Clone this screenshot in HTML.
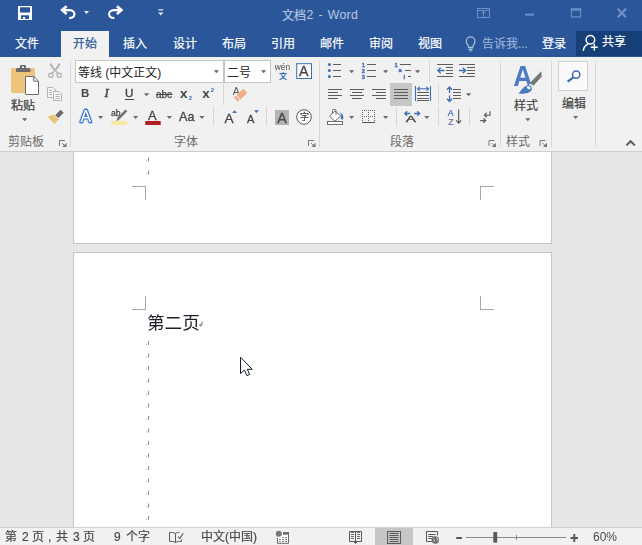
<!DOCTYPE html>
<html lang="zh-CN">
<head>
<meta charset="utf-8">
<title>文档2 - Word</title>
<style>
html,body{margin:0;padding:0;}
body{width:642px;height:545px;position:relative;overflow:hidden;background:#e4e7e6;font-family:"Liberation Sans","Noto Sans CJK SC",sans-serif;}
.a{position:absolute;}
svg.t{position:absolute;overflow:visible;}
svg.i{will-change:transform;}
svg.i{position:absolute;overflow:visible;left:0;top:0;}
svg text{font-family:"Liberation Sans","Noto Sans CJK SC",sans-serif;}
#title{left:0;top:0;width:642px;height:57px;background:#2b579a;}
#tab{left:61px;top:31px;width:48px;height:26px;background:#f1f1f1;}
#share{left:576px;top:31px;width:66px;height:25px;background:#173f77;}
#ribbon{left:0;top:57px;width:642px;height:94px;background:#f1f1f1;}
#ribline{left:0;top:151px;width:642px;height:1px;background:#cdcdcd;}
.page{background:#fff;border:1px solid #c6c6c6;box-sizing:border-box;}
#p1{left:73px;top:140px;width:479px;height:104px;}
#p2{left:73px;top:252px;width:479px;height:300px;}
#status{left:0;top:527px;width:642px;height:18px;background:#f1f1f1;border-top:1px solid #d0d0d0;box-sizing:border-box;}
.lt{font-family:"Liberation Sans",sans-serif;white-space:nowrap;line-height:1;}
.box{background:#fff;border:1px solid #c6c6c6;box-sizing:border-box;}
</style>
</head>
<body>
<div class="a page" id="p1"></div>
<div class="a page" id="p2"></div>

<!-- ===== document marks ===== -->
<svg class="i" width="642" height="545" viewBox="0 0 642 545">
<g fill="none" stroke="#a6a6a6" stroke-width="1" shape-rendering="crispEdges">
<path d="M132 186.500H145.500V200 M494 186.500H480.500V200 M132 309.500H145.500V296 M494 309.500H480.500V296"/>
</g>
<path d="M148.500 157.500V161.500" stroke="#8c8c8c" stroke-width="1" fill="none"/><rect x="146" y="160.300" width="1" height="1" fill="#b0b0b0"/><path d="M148.500 170.500V174.500" stroke="#8c8c8c" stroke-width="1" fill="none"/><rect x="146" y="173.300" width="1" height="1" fill="#b0b0b0"/><path d="M148.500 341.000V345.000" stroke="#8c8c8c" stroke-width="1" fill="none"/><rect x="146" y="343.800" width="1" height="1" fill="#b0b0b0"/><path d="M148.500 353.500V357.500" stroke="#8c8c8c" stroke-width="1" fill="none"/><rect x="146" y="356.300" width="1" height="1" fill="#b0b0b0"/><path d="M148.500 366.000V370.000" stroke="#8c8c8c" stroke-width="1" fill="none"/><rect x="146" y="368.800" width="1" height="1" fill="#b0b0b0"/><path d="M148.500 378.500V382.500" stroke="#8c8c8c" stroke-width="1" fill="none"/><rect x="146" y="381.300" width="1" height="1" fill="#b0b0b0"/><path d="M148.500 391.000V395.000" stroke="#8c8c8c" stroke-width="1" fill="none"/><rect x="146" y="393.800" width="1" height="1" fill="#b0b0b0"/><path d="M148.500 403.500V407.500" stroke="#8c8c8c" stroke-width="1" fill="none"/><rect x="146" y="406.300" width="1" height="1" fill="#b0b0b0"/><path d="M148.500 416.000V420.000" stroke="#8c8c8c" stroke-width="1" fill="none"/><rect x="146" y="418.800" width="1" height="1" fill="#b0b0b0"/><path d="M148.500 428.500V432.500" stroke="#8c8c8c" stroke-width="1" fill="none"/><rect x="146" y="431.300" width="1" height="1" fill="#b0b0b0"/><path d="M148.500 441.000V445.000" stroke="#8c8c8c" stroke-width="1" fill="none"/><rect x="146" y="443.800" width="1" height="1" fill="#b0b0b0"/><path d="M148.500 453.500V457.500" stroke="#8c8c8c" stroke-width="1" fill="none"/><rect x="146" y="456.300" width="1" height="1" fill="#b0b0b0"/><path d="M148.500 466.000V470.000" stroke="#8c8c8c" stroke-width="1" fill="none"/><rect x="146" y="468.800" width="1" height="1" fill="#b0b0b0"/><path d="M148.500 478.500V482.500" stroke="#8c8c8c" stroke-width="1" fill="none"/><rect x="146" y="481.300" width="1" height="1" fill="#b0b0b0"/><path d="M148.500 491.000V495.000" stroke="#8c8c8c" stroke-width="1" fill="none"/><rect x="146" y="493.800" width="1" height="1" fill="#b0b0b0"/><path d="M148.500 503.500V507.500" stroke="#8c8c8c" stroke-width="1" fill="none"/><rect x="146" y="506.300" width="1" height="1" fill="#b0b0b0"/><path d="M148.500 516.000V520.000" stroke="#8c8c8c" stroke-width="1" fill="none"/><rect x="146" y="518.800" width="1" height="1" fill="#b0b0b0"/>
<!-- paragraph mark after text -->
<g fill="none" stroke="#7a7a7a" stroke-width="1">
<path d="M202 321.500V325.200H199.600 M200.900 323.900L199.500 325.200L200.900 326.500"/>
</g>
<!-- mouse cursor -->
<path d="M240.500 357.200V373.600L244.400 370.100L246.900 375.600L249.600 374.400L247.300 369.300H252.200Z" fill="#fff" stroke="#0c1a33" stroke-width="1" stroke-linejoin="miter"/>
</svg>

<svg class="t" style="left:146.500px;top:313.400px" width="54.80" height="22.88" viewBox="0 0 54.80 22.88" fill="#1b1f2a" role="img" aria-label="第二页"><title>第二页</title><text x="0" y="15.488" font-size="17.600" fill="#1b1f2a">第二页</text></svg>

<div class="a" id="title"></div>
<div class="a" id="tab"></div>
<div class="a" id="share"></div>
<div class="a" id="ribbon"></div>
<div class="a" id="ribline"></div>
<div class="a" id="status"></div>
<div class="a" style="left:375px;top:528px;width:38px;height:17px;background:#c6c6c6;"></div>

<!-- font boxes -->
<div class="a box" style="left:75px;top:60px;width:149px;height:23px;"></div>
<div class="a box" style="left:224px;top:60px;width:47px;height:23px;"></div>
<!-- justify selected bg -->
<div class="a" style="left:390px;top:83px;width:22px;height:23px;background:#c6c6c6;"></div>
<!-- edit box -->
<div class="a" style="left:558px;top:61px;width:30px;height:30px;background:#fafafa;border:1px solid #cfcfcf;box-sizing:border-box;"></div>

<!-- title text -->
<svg class="t" style="left:282.300px;top:8.800px" width="26.00" height="15.60" viewBox="0 0 26.00 15.60" fill="#b9c7e0" role="img" aria-label="文档"><title>文档</title><text x="0" y="10.560" font-size="12" fill="#b9c7e0" stroke="#b9c7e0" stroke-width="0.200">文档</text></svg>
<div class="a lt" style="left:306.500px;top:8.800px;font-size:12.300px;color:#b9c7e0;word-spacing:1px;letter-spacing:0.350px;">2 - Word</div>

<!-- tabs -->
<svg class="t" style="left:15px;top:36.800px" width="26.00" height="15.60" viewBox="0 0 26.00 15.60" fill="#ffffff" role="img" aria-label="文件"><title>文件</title><text x="0" y="10.560" font-size="12" fill="#ffffff" stroke="#ffffff" stroke-width="0.200">文件</text></svg>
<svg class="t" style="left:72.600px;top:36.800px" width="26.00" height="15.60" viewBox="0 0 26.00 15.60" fill="#2b579a" role="img" aria-label="开始"><title>开始</title><text x="0" y="10.560" font-size="12" fill="#2b579a" stroke="#2b579a" stroke-width="0.200">开始</text></svg>
<svg class="t" style="left:122.600px;top:36.800px" width="26.00" height="15.60" viewBox="0 0 26.00 15.60" fill="#ffffff" role="img" aria-label="插入"><title>插入</title><text x="0" y="10.560" font-size="12" fill="#ffffff" stroke="#ffffff" stroke-width="0.200">插入</text></svg>
<svg class="t" style="left:172.800px;top:36.800px" width="26.00" height="15.60" viewBox="0 0 26.00 15.60" fill="#ffffff" role="img" aria-label="设计"><title>设计</title><text x="0" y="10.560" font-size="12" fill="#ffffff" stroke="#ffffff" stroke-width="0.200">设计</text></svg>
<svg class="t" style="left:221.600px;top:36.800px" width="26.00" height="15.60" viewBox="0 0 26.00 15.60" fill="#ffffff" role="img" aria-label="布局"><title>布局</title><text x="0" y="10.560" font-size="12" fill="#ffffff" stroke="#ffffff" stroke-width="0.200">布局</text></svg>
<svg class="t" style="left:270.600px;top:36.800px" width="26.00" height="15.60" viewBox="0 0 26.00 15.60" fill="#ffffff" role="img" aria-label="引用"><title>引用</title><text x="0" y="10.560" font-size="12" fill="#ffffff" stroke="#ffffff" stroke-width="0.200">引用</text></svg>
<svg class="t" style="left:320px;top:36.800px" width="26.00" height="15.60" viewBox="0 0 26.00 15.60" fill="#ffffff" role="img" aria-label="邮件"><title>邮件</title><text x="0" y="10.560" font-size="12" fill="#ffffff" stroke="#ffffff" stroke-width="0.200">邮件</text></svg>
<svg class="t" style="left:369px;top:36.800px" width="26.00" height="15.60" viewBox="0 0 26.00 15.60" fill="#ffffff" role="img" aria-label="审阅"><title>审阅</title><text x="0" y="10.560" font-size="12" fill="#ffffff" stroke="#ffffff" stroke-width="0.200">审阅</text></svg>
<svg class="t" style="left:417.800px;top:36.800px" width="26.00" height="15.60" viewBox="0 0 26.00 15.60" fill="#ffffff" role="img" aria-label="视图"><title>视图</title><text x="0" y="10.560" font-size="12" fill="#ffffff" stroke="#ffffff" stroke-width="0.200">视图</text></svg>
<svg class="t" style="left:481.800px;top:36.800px" width="48.01" height="15.60" viewBox="0 0 48.01 15.60" fill="#a6b8da" role="img" aria-label="告诉我..."><title>告诉我...</title><text x="0" y="10.560" font-size="12" fill="#a6b8da" stroke="#a6b8da" stroke-width="0.050">告诉我...</text></svg>
<svg class="t" style="left:541.600px;top:36.800px" width="26.00" height="15.60" viewBox="0 0 26.00 15.60" fill="#ffffff" role="img" aria-label="登录"><title>登录</title><text x="0" y="10.560" font-size="12" fill="#ffffff" stroke="#ffffff" stroke-width="0.200">登录</text></svg>
<svg class="t" style="left:601.800px;top:35.200px" width="26.00" height="15.60" viewBox="0 0 26.00 15.60" fill="#ffffff" role="img" aria-label="共享"><title>共享</title><text x="0" y="10.560" font-size="12" fill="#ffffff" stroke="#ffffff" stroke-width="0.200">共享</text></svg>

<!-- ribbon labels -->
<svg class="t" style="left:11px;top:98.600px" width="26.00" height="15.60" viewBox="0 0 26.00 15.60" fill="#444444" role="img" aria-label="粘贴"><title>粘贴</title><text x="0" y="10.560" font-size="12" fill="#444444" stroke="#444444" stroke-width="0.250">粘贴</text></svg>
<svg class="t" style="left:7.500px;top:134.800px" width="38.00" height="15.60" viewBox="0 0 38.00 15.60" fill="#6a6a6a" role="img" aria-label="剪贴板"><title>剪贴板</title><text x="0" y="10.560" font-size="12" fill="#6a6a6a">剪贴板</text></svg>
<svg class="t" style="left:174.200px;top:134.800px" width="26.00" height="15.60" viewBox="0 0 26.00 15.60" fill="#6a6a6a" role="img" aria-label="字体"><title>字体</title><text x="0" y="10.560" font-size="12" fill="#6a6a6a">字体</text></svg>
<svg class="t" style="left:390px;top:134.800px" width="26.00" height="15.60" viewBox="0 0 26.00 15.60" fill="#6a6a6a" role="img" aria-label="段落"><title>段落</title><text x="0" y="10.560" font-size="12" fill="#6a6a6a">段落</text></svg>
<svg class="t" style="left:514.200px;top:98.800px" width="26.00" height="15.60" viewBox="0 0 26.00 15.60" fill="#444444" role="img" aria-label="样式"><title>样式</title><text x="0" y="10.560" font-size="12" fill="#444444" stroke="#444444" stroke-width="0.200">样式</text></svg>
<svg class="t" style="left:505.800px;top:134.800px" width="26.00" height="15.60" viewBox="0 0 26.00 15.60" fill="#6a6a6a" role="img" aria-label="样式"><title>样式</title><text x="0" y="10.560" font-size="12" fill="#6a6a6a">样式</text></svg>
<svg class="t" style="left:562px;top:97px" width="26.00" height="15.60" viewBox="0 0 26.00 15.60" fill="#444444" role="img" aria-label="编辑"><title>编辑</title><text x="0" y="10.560" font-size="12" fill="#444444" stroke="#444444" stroke-width="0.200">编辑</text></svg>
<svg class="t" style="left:77.500px;top:65.600px" width="84.80" height="15.60" viewBox="0 0 84.80 15.60" fill="#262626" role="img" aria-label="等线 (中文正文)"><title>等线 (中文正文)</title><text x="0" y="10.560" font-size="12" fill="#262626">等线 (中文正文)</text></svg>
<svg class="t" style="left:227.200px;top:65.600px" width="26.00" height="15.60" viewBox="0 0 26.00 15.60" fill="#262626" role="img" aria-label="二号"><title>二号</title><text x="0" y="10.560" font-size="12" fill="#262626">二号</text></svg>
<svg class="t" style="left:278.800px;top:71.600px" width="10.00" height="10.40" viewBox="0 0 10.00 10.40" fill="#3e6db5" role="img" aria-label="文"><title>文</title><text x="0" y="7.040" font-size="8" font-weight="bold" fill="#3e6db5">文</text></svg>
<svg class="i" width="642" height="545" viewBox="0 0 642 545">
<!-- ===== title bar: QAT ===== -->
<!-- save -->
<path fill="#fff" fill-rule="evenodd" d="M18.300 6H31.700Q32 6 32 6.300V19.700Q32 20 31.700 20H18.300Q18 20 18 19.700V6.300Q18 6 18.300 6Z M20 7.200H30V12.600H20Z M21 15.200H29V18.900H25V17H23V18.900H21Z"/>
<g fill="none" stroke="#fff" stroke-linecap="butt" stroke-linejoin="miter">
<!-- undo -->
<path d="M66.600 6.300L62.200 10.100L66.600 13.900" stroke-width="2.700"/>
<path d="M62.600 10.100H69.500C73 10.100 74.400 12.300 74.400 14C74.400 16.400 72.300 17.900 69.200 18.100" stroke-width="2.100"/>
<!-- redo -->
<path d="M116.900 6.300L121.300 10.100L116.900 13.900" stroke-width="2.700"/>
<path d="M120.900 10.100H114C110.500 10.100 109.100 12.300 109.100 14C109.100 16.400 111.200 17.900 114.300 18.100" stroke-width="2.100"/>
</g>
<path d="M84 11H89L86.500 14Z" fill="#e6ecf5"/>
<path d="M158.400 9.300H163.200V10.600H158.400Z M158.200 12.400H163.400L160.800 15.600Z" fill="#e6ecf5"/>
<!-- window controls (dim) -->
<g fill="none" stroke="#7090c5" stroke-width="1">
<rect x="477.500" y="8.500" width="12" height="9"/>
<path d="M478 10.500H489 M483.500 11.500V17.500 M481.300 13.700L483.500 11.500L485.700 13.700"/>
<path d="M525 14.600H534" stroke-width="2"/>
<rect x="571.500" y="9" width="9" height="8" stroke-width="1.200"/>
<path d="M571 9.600H581" stroke-width="2.200"/>
<path d="M617.600 8.800L626 17.200 M626 8.800L617.600 17.200" stroke-width="2.300"/>
</g>
<!-- lightbulb -->
<g fill="none" stroke="#aebedc" stroke-width="1.200">
<path d="M468.600 47.400C468.600 45.300 466.300 44.200 466.300 41.200C466.300 38.700 468.200 36.900 470.600 36.900C473 36.900 474.900 38.700 474.900 41.200C474.900 44.200 472.600 45.300 472.600 47.400Z"/>
<path d="M468.500 49.400H472.700" stroke-width="1.700"/>
<path d="M469.500 51H471.700" stroke-width="0.900"/>
</g>
<!-- share person -->
<g fill="none" stroke="#fff" stroke-width="1.500">
<circle cx="590.400" cy="39.800" r="4.300"/>
<path d="M583.300 50.900C583.600 47 585.400 45 588.200 44"/>
<path d="M594.300 43.800V50.600 M590.800 47.200H597.800"/>
</g>

<!-- ===== clipboard group ===== -->
<!-- paste icon -->
<rect x="11" y="68" width="24" height="25" rx="2" fill="#ecc47c"/>
<path d="M16 72V69.500Q16 68 17.500 68H20V66Q20 65 21 65H25Q26 65 26 66V68H29Q30.500 68 30.500 69.500V72Z" fill="#6d6d6d"/>
<rect x="22" y="66.300" width="2" height="1.700" fill="#f1f1f1"/>
<path d="M25.500 76.500H33.800L38.500 81.200V94.500H25.500Z" fill="#fff" stroke="#6d6d6d" stroke-width="1"/>
<path d="M33.800 76.500V81.200H38.500" fill="none" stroke="#6d6d6d" stroke-width="1"/>
<path d="M22 118.200H27.200L24.600 121.200Z" fill="#666"/>
<!-- scissors (disabled, light) -->
<g fill="none" stroke="#b2b2b2" stroke-width="1.200">
<circle cx="50.800" cy="75.300" r="2.100"/>
<circle cx="59.200" cy="75.300" r="2.100"/>
<path d="M52 73.500L56.500 68.500 M58 73.500L53.500 68.500"/>
<path d="M56 69.500L59.800 63.600 M54 69.500L50.200 63.600" stroke-width="2"/>
</g>
<!-- copy (disabled) -->
<g fill="#f6f6f6" stroke="#b4b4b4" stroke-width="1">
<path d="M47.500 87.500H53L55.500 90V97.500H47.500Z"/>
<path d="M53.500 91.500H59L61.500 94V100.500H53.500Z"/>
</g>
<g stroke="#b4b4b4" stroke-width="1" fill="none">
<path d="M49 90.500H52 M49 92.500H52 M49 94.500H52 M55.500 94.500H59.500 M55.500 96.500H59.500 M55.500 98.500H59.500"/>
</g>
<!-- format painter -->
<path d="M60.600 109.800L63.600 112.800L58.200 118.200L55.200 115.200Z" fill="#6a6a6a"/>
<path d="M54 114.500L58.800 119.300L54.500 124L47.300 116.800Z" fill="#ecc47c"/>
<path d="M54.600 115.200L58.200 118.800" stroke="#f1f1f1" stroke-width="0.800"/>
<!-- launcher icons -->
<g id="lnch" fill="none" stroke="#777" stroke-width="1">
<path d="M59.500 146V140.500H65"/>
<path d="M62 143L65 146"/>
<path d="M66.500 142.800V147H62.300Z" fill="#777" stroke="none"/>
</g>
<use href="#lnch" x="249"/>
<use href="#lnch" x="429.500"/>
<use href="#lnch" x="480.500"/>

<!-- ===== separators ===== -->
<g stroke="#d6d6d6" stroke-width="1" fill="none" shape-rendering="crispEdges">
<path d="M70.500 61V147 M319.500 61V147 M500.500 61V147 M551.500 61V147 M595.500 61V147"/>
<path d="M223.500 84V105 M213.500 106V126 M266.500 106V126"/>
<path d="M429.500 61V82 M438.500 84V105 M396.500 107V126 M438.500 107V126 M469.500 107V126"/>
</g>

<!-- ===== dropdown arrows ===== -->
<defs><path id="dd" d="M0 0H5.200L2.600 3Z"/></defs>
<g fill="#6a6a6a">
<use href="#dd" x="213.800" y="70.200"/>
<use href="#dd" x="261" y="70.200"/>
<use href="#dd" x="144" y="93.200"/>
<use href="#dd" x="98" y="116"/>
<use href="#dd" x="133" y="116"/>
<use href="#dd" x="166.800" y="116"/>
<use href="#dd" x="199.400" y="116"/>
<use href="#dd" x="349" y="70.200"/>
<use href="#dd" x="383" y="70.200"/>
<use href="#dd" x="415" y="70.200"/>
<use href="#dd" x="466" y="93.200"/>
<use href="#dd" x="349" y="116"/>
<use href="#dd" x="383" y="116"/>
<use href="#dd" x="424.200" y="116"/>
<use href="#dd" x="525.200" y="118.200"/>
<use href="#dd" x="573" y="116"/>
</g>

<!-- ===== font group ===== -->
<text x="81.100" y="97.400" font-size="11.500" font-weight="bold" fill="#444">B</text>
<text x="104.600" y="97.400" font-size="12.600" font-style="italic" fill="#444" stroke="#444" stroke-width="0.450" style="font-family:'Liberation Serif',serif">I</text>
<text x="124.900" y="97.400" font-size="11.600" fill="#444" stroke="#444" stroke-width="0.350">U</text>
<path d="M125 99.500H134" stroke="#444" stroke-width="1"/>
<text x="156" y="97.800" font-size="10" fill="#444" stroke="#444" stroke-width="0.250">abc</text>
<path d="M156 94.500H172.500" stroke="#444" stroke-width="1"/>
<text x="180" y="97.900" font-size="13.500" font-weight="bold" fill="#444">x</text>
<text x="188.800" y="99.900" font-size="6" font-weight="bold" fill="#3e6db5">2</text>
<text x="202.300" y="97.900" font-size="13.500" font-weight="bold" fill="#444">x</text>
<text x="210.800" y="92.400" font-size="6" font-weight="bold" fill="#3e6db5">2</text>
<!-- text effects A -->
<text x="80.400" y="121.900" font-size="15.800" fill="#fff" stroke="#cddff5" stroke-width="4.200" stroke-linejoin="round">A</text>
<text x="80.400" y="121.900" font-size="15.800" fill="#fff" stroke="#3570c4" stroke-width="2.400" stroke-linejoin="round">A</text>
<text x="80.400" y="121.900" font-size="15.800" fill="#fff" stroke="#fff" stroke-width="0.200">A</text>
<!-- highlighter -->
<text x="111" y="116.200" font-size="8.600" fill="#444" stroke="#444" stroke-width="0.250">ab</text>
<path d="M126.400 110.400L117.600 119.400" stroke="#6d6d6d" stroke-width="2.500"/>
<path d="M118 118.600L116 121L119 120Z" fill="#6d6d6d"/>
<rect x="111.300" y="121" width="15.600" height="4" fill="#fbe8a0"/>
<!-- font color -->
<text x="148.100" y="119.800" font-size="12.900" fill="#444" stroke="#444" stroke-width="0.300">A</text>
<rect x="145.300" y="121" width="15.400" height="4" fill="#ad1f23"/>
<!-- Aa -->
<text x="179" y="120.700" font-size="12.600" fill="#444" stroke="#444" stroke-width="0.300">Aa</text>
<!-- clear formatting -->
<text x="232.700" y="94.800" font-size="10.400" fill="#555">A</text>
<g transform="translate(240.600,95.200) rotate(-42)">
<rect x="-6.500" y="-3" width="13" height="6" rx="0.800" fill="#efae88"/>
<rect x="-3.800" y="-3" width="0.900" height="6" fill="#f1f1f1"/>
</g>
<!-- grow / shrink -->
<text x="224.600" y="122.900" font-size="13.600" fill="#444" stroke="#444" stroke-width="0.300">A</text>
<path d="M232.200 113H237L234.600 110.300Z" fill="#3e6db5"/>
<text x="247.100" y="122.900" font-size="11" fill="#444" stroke="#444" stroke-width="0.300">A</text>
<path d="M254 110.300H259L256.500 113.100Z" fill="#3e6db5"/>
<!-- wén -->
<text x="274.800" y="69.500" font-size="8.300" fill="#4a4a4a">wén</text>
<!-- boxed A -->
<rect x="296.700" y="63.700" width="14.800" height="14.800" fill="#fafafa" stroke="#3e6db5" stroke-width="1"/>
<text x="299" y="76" font-size="14.200" fill="#444" stroke="#444" stroke-width="0.300">A</text>
<!-- shaded A -->
<rect x="275" y="110" width="14" height="15" fill="#b3b3b3"/>
<text x="277.200" y="122.600" font-size="14.200" fill="#444" stroke="#444" stroke-width="0.300">A</text>
<!-- enclosed -->
<circle cx="304" cy="117" r="7.300" fill="#fff" stroke="#555" stroke-width="1"/>

<!-- ===== paragraph group ===== -->
<g fill="#3e6db5">
<circle cx="329.400" cy="64.600" r="1.500"/><circle cx="329.400" cy="70.600" r="1.500"/><circle cx="329.400" cy="76.500" r="1.500"/>
</g>
<g stroke="#5c5c5c" stroke-width="1" fill="none" shape-rendering="crispEdges">
<path d="M333 64.500H341 M333 70.500H341 M333 76.500H341"/>
<path d="M367 64.500H376 M367 70.500H376 M367 76.500H376"/>
<path d="M400 64.500H411 M405 70.500H411 M408 76.500H411"/>
<!-- align left/center/right/justify -->
<path d="M328 89.500H342 M328 92.500H338 M328 95.500H342 M328 98.500H338"/>
<path d="M350 89.500H364 M352 92.500H362 M350 95.500H364 M352 98.500H362"/>
<path d="M372 89.500H386 M376 92.500H386 M372 95.500H386 M376 98.500H386"/>
<path d="M394 89.500H408 M394 92.500H408 M394 95.500H408 M394 98.500H408"/>
<!-- distributed -->
<path d="M417 92.500H429 M417 95.500H429 M417 98.500H429 M417 100.500H429"/>
<!-- line spacing lines -->
<path d="M453 89.500H461 M453 92.500H461 M453 95.500H461 M453 98.500H461"/>
<!-- indent icons -->
<path d="M437 64.500H453 M446 67.500H453 M446 70.500H453 M446 73.500H453 M437 76.500H453"/>
<path d="M459 64.500H475 M467 67.500H475 M467 70.500H475 M467 73.500H475 M459 76.500H475"/>
</g>
<!-- numbering digits -->
<g font-size="5.800" font-weight="bold" fill="#3e6db5" stroke="#3e6db5" stroke-width="0.300">
<text x="361.800" y="66.600">1</text><text x="361.800" y="72.600">2</text><text x="361.800" y="78.500">3</text>
<text x="394.600" y="66.600">1</text><text x="398.600" y="71.900">a</text><text x="403.600" y="78.800">i</text>
</g>
<g stroke="#3e6db5" stroke-width="1.300" fill="none">
<!-- indent arrows -->
<path d="M444.400 70.500H438 M440.600 67.800L437.800 70.500L440.600 73.200"/>
<path d="M459 70.500H465.400 M462.800 67.800L465.600 70.500L462.800 73.200"/>
<!-- distributed bars & arrow -->
<path d="M415.500 86V101 M430.500 86V101" stroke-width="1.100"/>
<path d="M417.600 88.800H428.600 M419.800 86.800L417.600 88.800L419.800 90.800 M426.400 86.800L428.600 88.800L426.400 90.800" stroke-width="1.100"/>
<!-- line spacing arrow -->
<path d="M449.500 87.200V93 M447 89.700L449.500 87L452 89.700 M449.500 95.600V101.300 M447 98.800L449.500 101.500L452 98.800" stroke-width="1.300"/>
<!-- asian layout arrows -->
<path d="M404.800 113.500H410.200 M407.200 111.300L404.800 113.500L407.200 115.700 M414.200 113.500H419.600 M417.200 111.300L419.600 113.500L417.200 115.700" stroke-width="1.300"/>
</g>
<!-- asian layout wide A -->
<text transform="translate(405.700,122.300) scale(1.600,0.950)" font-size="9.500" fill="#444" stroke="#444" stroke-width="0.350">A</text>
<!-- paint bucket -->
<g fill="#fff" stroke="#6e6e6e" stroke-width="1">
<path d="M329.500 116.300L335 111L340.600 116L335 121.200Z"/>
<path d="M332.500 113.400V110.500Q332.500 109.500 333.500 109.500H335Q336 109.500 336 110.500V115.200" fill="none"/>
<rect x="327.500" y="121.500" width="15" height="3"/>
</g>
<path d="M339.600 112.600C342.200 113.300 343.700 115.800 343.300 118.200C343 119.700 341.400 119.900 340.800 118.700C340.400 117.700 341.400 116.600 341.200 115.400C341 114.400 340.300 113.500 339.600 112.600Z" fill="#3e6db5"/>
<!-- borders icon -->
<path d="M362 110h1v1h-1zM362 112h1v1h-1zM362 114h1v1h-1zM362 116h1v1h-1zM362 118h1v1h-1zM362 120h1v1h-1zM364 110h1v1h-1zM364 116h1v1h-1zM366 110h1v1h-1zM366 116h1v1h-1zM368 110h1v1h-1zM368 112h1v1h-1zM368 114h1v1h-1zM368 116h1v1h-1zM368 118h1v1h-1zM368 120h1v1h-1zM370 110h1v1h-1zM370 116h1v1h-1zM372 110h1v1h-1zM372 116h1v1h-1zM374 110h1v1h-1zM374 112h1v1h-1zM374 114h1v1h-1zM374 116h1v1h-1zM374 118h1v1h-1zM374 120h1v1h-1z" fill="#666" shape-rendering="crispEdges"/>
<path d="M362 122.500H375" stroke="#555" stroke-width="1" shape-rendering="crispEdges"/>
<!-- sort -->
<text x="447.700" y="115.900" font-size="8.800" fill="#3e6db5" stroke="#3e6db5" stroke-width="0.250">A</text>
<text x="448.200" y="124.700" font-size="8.800" fill="#6f62ad" stroke="#6f62ad" stroke-width="0.200">Z</text>
<path d="M458.700 109.500V123 M456.200 120.400L458.700 123.200L461.200 120.400" stroke="#555" stroke-width="1.100" fill="none"/>
<!-- show marks -->
<g stroke="#555" stroke-width="1.100" fill="none">
<path d="M490 111.300V115.200H484.600 M486.800 113L484.400 115.200L486.800 117.400"/>
<path d="M480.200 120.600H485.600 M483.400 118.400L485.800 120.600L483.400 122.800"/>
</g>

<!-- ===== styles ===== -->
<text transform="translate(513.200,85.800) scale(0.900,1)" font-size="29.600" font-weight="bold" fill="#4a7bc4">A</text>
<path d="M541.400 71.200L541.600 76.800L533.400 85.800L530 82.800Z" fill="#767676"/>
<path d="M529.800 83.600L532.500 86L531.400 87.200L528.700 84.800Z" fill="#f1f1f1"/>
<path d="M518.400 93.800C521.500 90 523.500 86.200 527.500 85.200C530.500 84.800 532.200 87 531.800 89.400C531 92.600 526.500 93.800 518.400 93.800Z" fill="#4a7bc4"/>
<ellipse cx="528.600" cy="87.600" rx="2" ry="1.400" fill="#fff" transform="rotate(35 528.600 87.600)"/>
<!-- ===== edit magnifier ===== -->
<circle cx="576.200" cy="74.600" r="3.700" fill="none" stroke="#3e6db5" stroke-width="1.500"/>
<path d="M573.400 77.400L567.600 81.600" stroke="#3e6db5" stroke-width="2.200"/>
<!-- collapse chevron -->
<path d="M626.400 145.400L630.600 141.200L634.800 145.400" fill="none" stroke="#5a5a5a" stroke-width="2"/>

<!-- ===== status bar icons ===== -->
<g fill="none" stroke="#5a5a5a" stroke-width="1">
<!-- proofing book -->
<path d="M175.500 533.500C173.500 532.300 171.500 532.300 169.500 532.500V541.500C171.500 541.300 173.500 541.300 175.500 542.500C177.500 541.300 179 541.300 181.500 541.500V539.500"/>
<path d="M175.500 533.500V542.500 M175.500 533.500C177 532.600 178 532.400 179.500 532.500"/>
<path d="M178 536.500L179.800 538.500L183.200 533.200" stroke-width="1.100"/>
<!-- read mode -->
<path d="M349.500 531.500V541.500H361.500V531.500Z"/>
<path d="M355.500 531.500V543.500 M354 542L355.500 543.500L357 542" />
<path d="M351 532.500H354 M351 534.500H354 M351 536.500H354 M351 538.500H354 M357 532.500H360 M357 534.500H360 M357 536.500H360 M357 538.500H360" stroke="#707070"/>
<!-- print layout -->
<rect x="387.500" y="531.500" width="13" height="12"/>
<path d="M389.500 533.500H398.500 M389.500 535.500H398.500 M389.500 537.500H398.500 M389.500 539.500H398.500 M389.500 541.500H398.500"/>
<!-- web layout -->
<path d="M432 541.500H426.500V531.500H437.500V535.500"/>
<path d="M428.300 534.500H435.700 M428.300 536.500H433 M428.300 538.500H432"/>
</g>
<circle cx="435.300" cy="540" r="3.700" fill="#6a6a6a"/>
<path d="M433.200 538.600L434.600 540.200L434 542 M436 537.400L437.800 539L436.800 541" fill="none" stroke="#d8d8d8" stroke-width="0.900"/>
<!-- macro icon -->
<rect x="278" y="532.500" width="10.500" height="11" fill="#fff"/>
<path d="M277.500 538V543.300H288.500V532.500H283" fill="none" stroke="#6a6a6a" stroke-width="1"/>
<rect x="283" y="532" width="6" height="2.700" fill="#707070"/>
<circle cx="278.800" cy="533.700" r="3" fill="#777"/>
<g fill="#6a6a6a"><rect x="282.100" y="537.000" width="1.800" height="0.900"/><rect x="285.200" y="537.000" width="1.800" height="0.900"/><rect x="279.000" y="539.100" width="1.800" height="0.900"/><rect x="282.100" y="539.100" width="1.800" height="0.900"/><rect x="285.200" y="539.100" width="1.800" height="0.900"/><rect x="279.000" y="541.100" width="1.800" height="0.900"/><rect x="282.100" y="541.100" width="1.800" height="0.900"/><rect x="285.200" y="541.100" width="1.800" height="0.900"/></g>
<!-- zoom slider -->
<path d="M456.200 538H462" stroke="#5a5a5a" stroke-width="2"/>
<path d="M466 537.500H565.500" stroke="#8a8a8a" stroke-width="1" shape-rendering="crispEdges"/>
<path d="M516.500 535V540" stroke="#8a8a8a" stroke-width="1" shape-rendering="crispEdges"/>
<rect x="493.300" y="532" width="3.900" height="10.600" fill="#5a5a5a"/>
<path d="M570.600 538H578 M574.300 534V542" stroke="#5a5a5a" stroke-width="2"/>
</svg>

<svg class="t" style="left:299.500px;top:112.300px" width="11.00" height="11.70" viewBox="0 0 11.00 11.70" fill="#444444" role="img" aria-label="字"><title>字</title><text x="0" y="7.920" font-size="9" fill="#444444" stroke="#444444" stroke-width="0.200">字</text></svg>

<!-- status bar -->
<svg class="t" style="left:4.800px;top:530.400px" width="14.00" height="15.60" viewBox="0 0 14.00 15.60" fill="#4a4a4a" role="img" aria-label="第"><title>第</title><text x="0" y="10.560" font-size="12" fill="#4a4a4a" stroke="#4a4a4a" stroke-width="0.200">第</text></svg><svg class="t" style="left:21.700px;top:530.400px" width="8.66" height="15.60" viewBox="0 0 8.66 15.60" fill="#4a4a4a" role="img" aria-label="2"><title>2</title><text x="0" y="10.560" font-size="12" fill="#4a4a4a" stroke="#4a4a4a" stroke-width="0.200">2</text></svg><svg class="t" style="left:31.800px;top:530.400px" width="14.00" height="15.60" viewBox="0 0 14.00 15.60" fill="#4a4a4a" role="img" aria-label="页"><title>页</title><text x="0" y="10.560" font-size="12" fill="#4a4a4a" stroke="#4a4a4a" stroke-width="0.200">页</text></svg><svg class="t" style="left:48.200px;top:530.400px" width="5.34" height="15.60" viewBox="0 0 5.34 15.60" fill="#4a4a4a" role="img" aria-label=","><title>,</title><text x="0" y="10.560" font-size="12" fill="#4a4a4a" stroke="#4a4a4a" stroke-width="0.200">,</text></svg><svg class="t" style="left:55.600px;top:530.400px" width="14.00" height="15.60" viewBox="0 0 14.00 15.60" fill="#4a4a4a" role="img" aria-label="共"><title>共</title><text x="0" y="10.560" font-size="12" fill="#4a4a4a" stroke="#4a4a4a" stroke-width="0.200">共</text></svg><svg class="t" style="left:72.500px;top:530.400px" width="8.66" height="15.60" viewBox="0 0 8.66 15.60" fill="#4a4a4a" role="img" aria-label="3"><title>3</title><text x="0" y="10.560" font-size="12" fill="#4a4a4a" stroke="#4a4a4a" stroke-width="0.200">3</text></svg><svg class="t" style="left:83.100px;top:530.400px" width="14.00" height="15.60" viewBox="0 0 14.00 15.60" fill="#4a4a4a" role="img" aria-label="页"><title>页</title><text x="0" y="10.560" font-size="12" fill="#4a4a4a" stroke="#4a4a4a" stroke-width="0.200">页</text></svg>
<svg class="t" style="left:114.200px;top:530.400px" width="8.66" height="15.60" viewBox="0 0 8.66 15.60" fill="#4a4a4a" role="img" aria-label="9"><title>9</title><text x="0" y="10.560" font-size="12" fill="#4a4a4a" stroke="#4a4a4a" stroke-width="0.200">9</text></svg><svg class="t" style="left:126.400px;top:530.400px" width="26.00" height="15.60" viewBox="0 0 26.00 15.60" fill="#4a4a4a" role="img" aria-label="个字"><title>个字</title><text x="0" y="10.560" font-size="12" fill="#4a4a4a" stroke="#4a4a4a" stroke-width="0.200">个字</text></svg>
<svg class="t" style="left:200.600px;top:530.400px" width="58.11" height="15.60" viewBox="0 0 58.11 15.60" fill="#4a4a4a" role="img" aria-label="中文(中国)"><title>中文(中国)</title><text x="0" y="10.560" font-size="12" fill="#4a4a4a" stroke="#4a4a4a" stroke-width="0.200">中文(中国)</text></svg>
<div class="a lt" style="left:593px;top:531.300px;font-size:12px;color:#4a4a4a;">60%</div>
</body>
</html>
